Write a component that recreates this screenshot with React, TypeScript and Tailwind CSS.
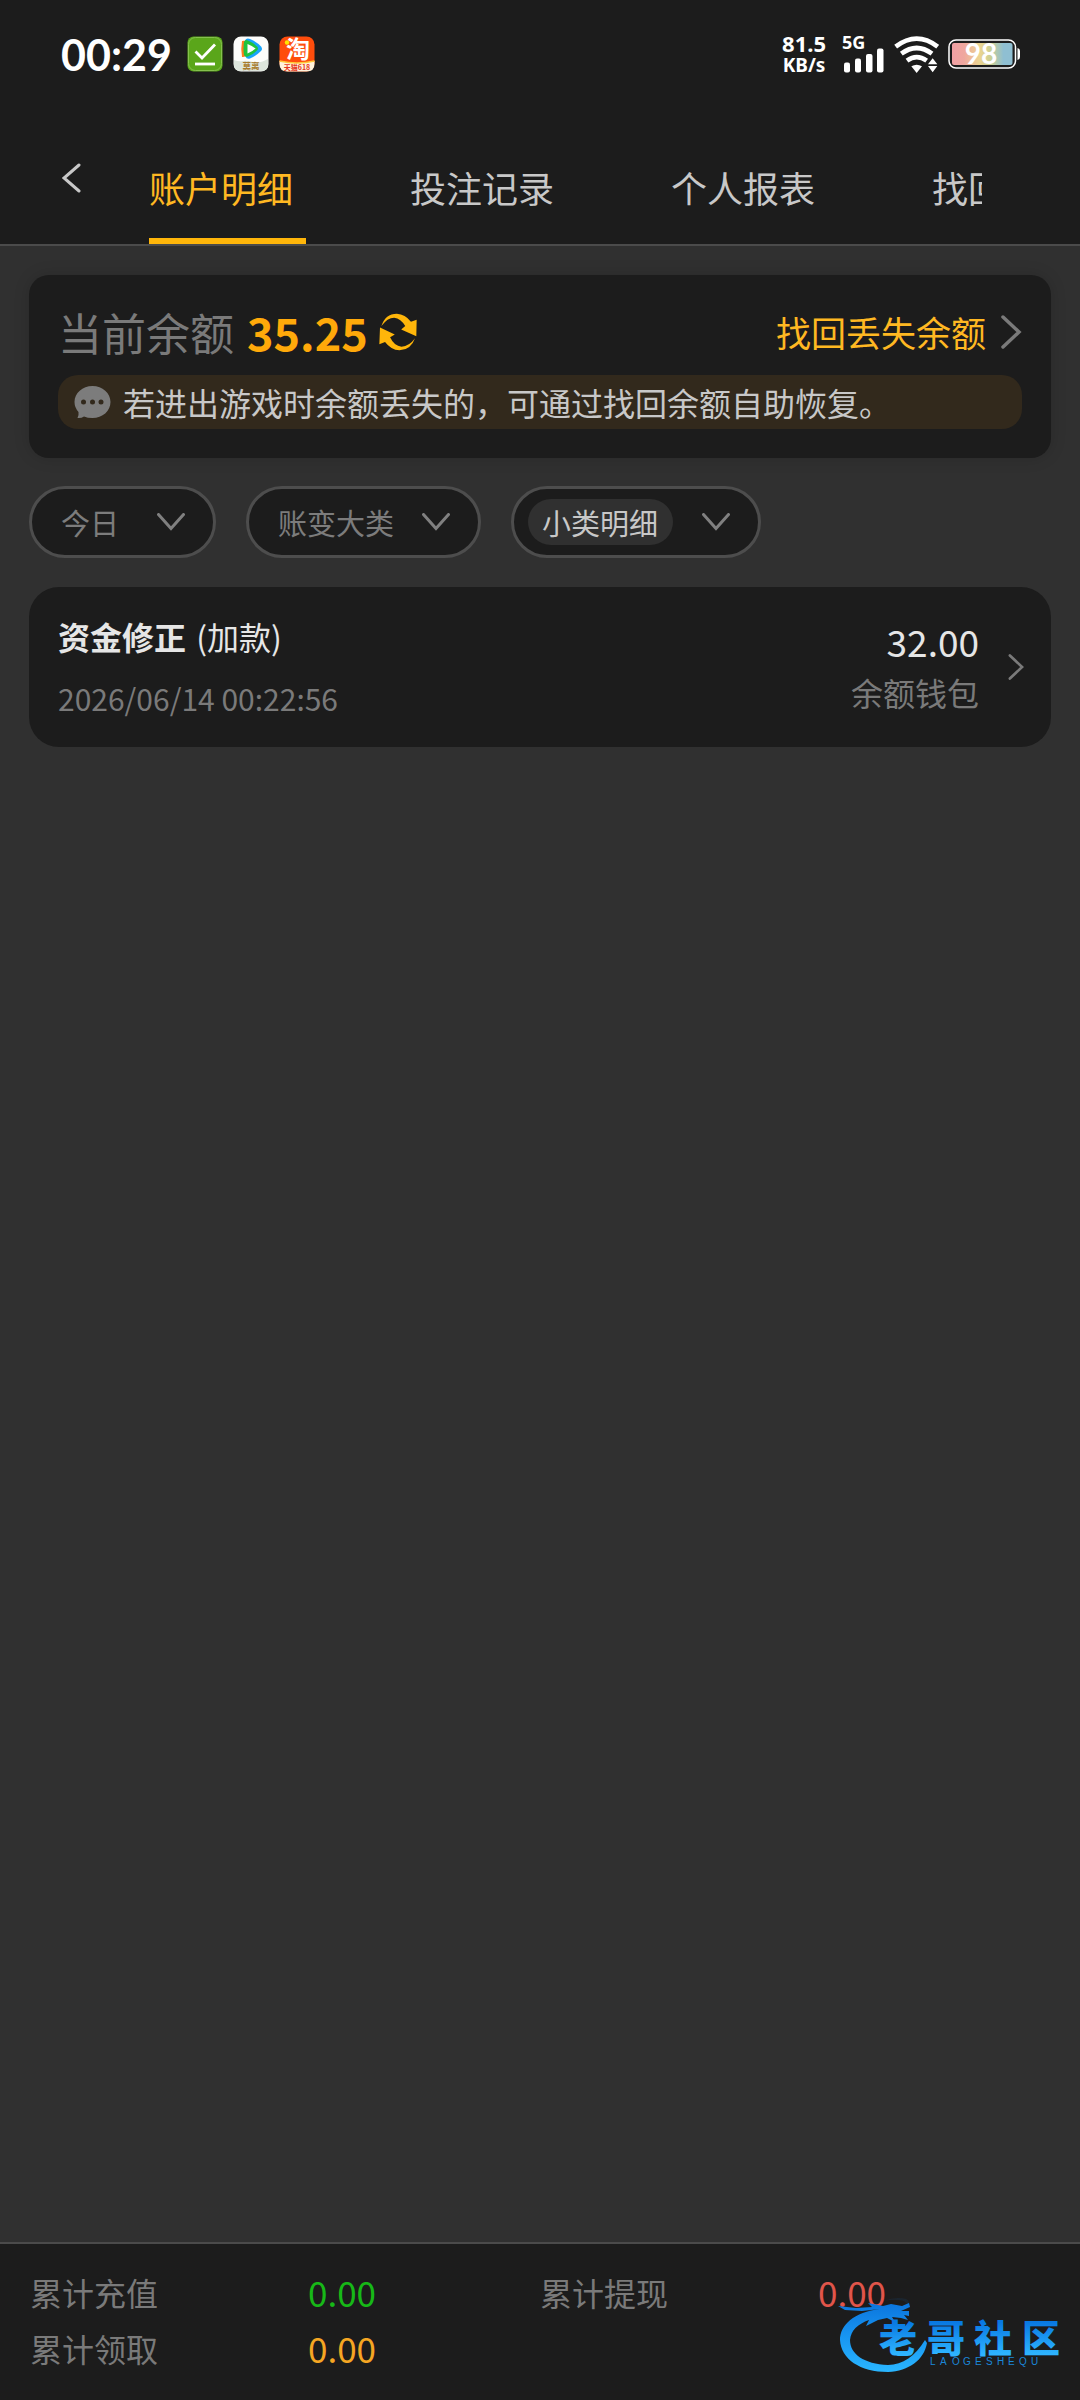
import type { ReactNode } from "react";

function ChevronDown() {
  return (
    <svg className="pointer-events-none h-[18px] w-[28px] shrink-0" viewBox="0 0 28 18" fill="none" stroke="#808080" strokeWidth="3" strokeLinecap="round" aria-hidden="true">
      <path d="M1.5 1.5 14 15.5 26.5 1.5" />
    </svg>
  );
}

function ChevronRight({ className }: { className: string }) {
  return (
    <svg className={className} viewBox="0 0 20 34" fill="none" stroke="#7a7a7a" strokeWidth="3.5" strokeLinecap="round" aria-hidden="true">
      <path d="M2 2 18 17 2 32" />
    </svg>
  );
}

function DownloadedIcon() {
  return (
    <svg className="size-9" viewBox="0 0 36 36" aria-hidden="true">
      <rect x="0.5" y="0.5" width="35" height="35" rx="6" fill="#5aa61a" />
      <rect x="1.5" y="1.5" width="33" height="33" rx="7" fill="none" stroke="#86c04f" />
      <path d="m8.5 15.5 6.5 6.5L28 8.5" fill="none" stroke="#fff" strokeWidth="2.8" />
      <path d="M8 28h20" stroke="#fff" strokeWidth="2.8" />
    </svg>
  );
}

function VideoIcon() {
  return (
    <svg className="size-9" viewBox="0 0 36 36" aria-hidden="true">
      <rect x="0.5" y="0.5" width="35" height="35" rx="7.5" fill="#fdfdfb" />
      <path d="M1 24q5 2 9 1t10 1 15-3v6q0 6-7 6H8q-7 0-7-6z" fill="#dde5dc" />
      <path d="M9 5Q7.5 13 9 21q3 .5 5-2V6Q12 4 9 5z" fill="#ff7a1c" />
      <path d="M12 4.5q1.5-3 5-1.5 7 3 11 7.5 2 2.5 0 4.5-5 5-11 7.5-3.5 1-4.5-2z" fill="#18a4fb" />
      <path d="M11 6q1-3 4-1.5 5 2 9 6 2 2 0 4-4 4-9 6-3 1-4-1.5-1-6 0-13z" fill="#20c33c" />
      <path d="M14.5 8q5 2 8 4.5-3 3-8 5z" fill="#fff" />
      <text x="18" y="32.5" textAnchor="middle" fontSize="8.5" fontWeight="700" fill="#a87a2a" fontFamily="Noto Sans CJK SC, sans-serif">莫离</text>
    </svg>
  );
}

function TaobaoIcon() {
  return (
    <svg className="size-9 overflow-visible" viewBox="0 0 36 36" aria-hidden="true">
      <rect x="0.5" y="0.5" width="35" height="35" rx="8" fill="#ff4d0c" />
      <path d="M.5 25q17.5 4 35 0v3q0 7.5-8 7.5h-19q-8 0-8-7.5z" fill="#fff3dc" />
      <path d="M.5 25q17.5 4 35 0" fill="none" stroke="#ffc83a" strokeWidth="1.5" />
      <text x="19" y="22" textAnchor="middle" fontSize="24" fontWeight="700" fill="#fff" fontFamily="Noto Sans CJK SC, sans-serif">淘</text>
      <circle cx="8" cy="6.5" r="2.2" fill="#ffe600" />
      <text x="18" y="33.5" textAnchor="middle" fontSize="7" fontWeight="700" fill="#e5361d" fontFamily="Noto Sans CJK SC, sans-serif">天猫618</text>
    </svg>
  );
}

function SignalIcon() {
  return (
    <svg className="h-[26px] w-[42px]" viewBox="0 0 42 26" fill="#fff" aria-hidden="true">
      <rect x="2" y="15.5" width="6" height="10" rx="2" />
      <rect x="13" y="11.5" width="6" height="14" rx="2" />
      <rect x="24" y="7" width="6.5" height="18.5" rx="2" />
      <rect x="35" y="1.5" width="6.5" height="24" rx="2" />
    </svg>
  );
}

function WifiIcon() {
  return (
    <svg className="h-[37px] w-[45px]" viewBox="402 46 135 111" fill="none" stroke="#fff" strokeWidth="14" aria-hidden="true">
      <path d="M407 78Q470 30 533 78" />
      <path d="M424 99Q470 65 516 99" />
      <path d="M441 120Q470 99 500 120" />
      <path d="M454 137q16-9 32 0l-16 20z" fill="#fff" stroke="none" />
      <path d="m518 113 14 18h-28zM504 136h28l-14 19z" fill="#fff" stroke="none" />
    </svg>
  );
}

function BatteryIcon() {
  return (
    <svg className="h-[30px] w-[73px] overflow-visible" viewBox="0 0 73 30" role="img" aria-label="98%">
      <defs>
        <linearGradient id="charge">
          <stop offset="0" stopColor="#f2a0a4" />
          <stop offset="0.2" stopColor="#efa79f" />
          <stop offset="0.45" stopColor="#ecd491" />
          <stop offset="0.65" stopColor="#c9cf94" />
          <stop offset="0.85" stopColor="#8fbfd2" />
          <stop offset="1" stopColor="#8fbfd2" />
        </linearGradient>
      </defs>
      <rect x="1" y="1" width="66.5" height="28" rx="7" fill="none" stroke="#fff" strokeWidth="1.5" />
      <rect x="4" y="4" width="60.5" height="22" rx="2" fill="url(#charge)" />
      <path d="M69.5 9q2.5.5 2.5 3v6q0 2.5-2.5 3z" fill="#fff" />
      <text x="33" y="25" textAnchor="middle" fontSize="28" fontWeight="700" fill="#fff" fontFamily="Lato, sans-serif">98</text>
    </svg>
  );
}

function RefreshIcon() {
  return (
    <svg className="h-[38px] w-[38px]" viewBox="1079 145 113 113" fill="#ffb60a" aria-hidden="true">
      <path d="M1086 184Q1098 147 1132 147 1157 148 1174 171L1191 165 1190 214 1145 194 1157 184Q1144 161 1124 159 1104 159 1086 184z" />
      <path d="M1082 188 1126 209 1112 217Q1124 243 1146 245 1169 244 1186 220 1174 255 1140 256 1114 254 1097 231L1080 238z" />
    </svg>
  );
}

function MessageIcon() {
  return (
    <svg className="h-[34px] w-[37px] shrink-0" viewBox="0 0 37 34" aria-hidden="true">
      <path d="M18.5 1C28.5 1 36.5 8 36.5 17S28.5 33 18.5 33q-5 0-8.5-1.5Q7 33.5 3.5 33q1.5-3 1-6Q.5 22.5.5 17C.5 8 8.5 1 18.5 1z" fill="#7c7c7c" />
      <g fill="#32291c">
        <circle cx="9.5" cy="17" r="2.5" />
        <circle cx="18.5" cy="17" r="2.5" />
        <circle cx="27" cy="17" r="2.5" />
      </g>
    </svg>
  );
}

function CommunityLogo() {
  return (
    <svg className="pointer-events-none absolute right-[14px] bottom-[22px] h-[80px] w-[228px] overflow-visible" viewBox="0 0 228 80" role="img" aria-label="老哥社区">
      <defs>
        <linearGradient id="ring" gradientUnits="userSpaceOnUse" x1="0" y1="4" x2="0" y2="74">
          <stop offset="0" stopColor="#0b74dc" />
          <stop offset="0.5" stopColor="#1896f2" />
          <stop offset="1" stopColor="#2ab6ff" />
        </linearGradient>
        <linearGradient id="name" gradientUnits="userSpaceOnUse" x1="0" y1="24" x2="0" y2="56">
          <stop offset="0" stopColor="#0878e2" />
          <stop offset="1" stopColor="#2eb4ff" />
        </linearGradient>
      </defs>
      <g fill="url(#ring)">
        <path d="M42 11C16 14 2 27 2 42 3 61 22 74 50 74 71 73 86 62 89 45L87 42C77 58 65 67 50 67 26 66 12 56 12 42 13 32 20 26 31 22L28 28 40 22 49 20 57 24 54 19 63 20 70 22 66 17 71 18 71 13 63 13 72 9 71 5 64 8 53 6 45 8 30 5 34 9 18 10 0 8 7 12 24 13z" />
        <path d="M46 3Q58-2 68 1q5 3 2 7-2-6-9-6-8-1-15 1z" opacity="0.1" />
      </g>
      <text x="41 89 136 184" y="54" fontSize="38" fontWeight="900" fill="url(#name)" fontFamily="Noto Sans CJK SC, sans-serif">老哥社区</text>
      <text x="92 102 114 125 137 148 159 170 181 193" y="67" fontSize="10" fill="#1b86d8" fontFamily="Liberation Sans, sans-serif">LAOGESHEQU</text>
    </svg>
  );
}

const tabs = ["账户明细", "投注记录", "个人报表", "找回余额"];

const totals = [
  { label: "累计充值", value: "0.00", color: "text-[#17b817]" },
  { label: "累计提现", value: "0.00", color: "text-[#e0554a]" },
  { label: "累计领取", value: "0.00", color: "text-[#f5a623]" },
];

function FilterChip({ label, className, selectClass, children }: { label: string; className: string; selectClass: string; children: ReactNode }) {
  return (
    <label className={`flex h-[72px] items-center justify-between rounded-full border-[3px] border-[#4d4d4d] bg-[#1c1c1c] pr-7 text-[29px] ${className}`}>
      <span className="sr-only">{label}</span>
      <select className={`appearance-none leading-[46px] outline-none ${selectClass}`}>{children}</select>
      <ChevronDown />
    </label>
  );
}

export default function App() {
  return (
    <div className="flex min-h-screen flex-col bg-[#303030] font-['Noto_Sans_CJK_SC',sans-serif] text-[#c8c8c8]">
      <header className="border-b-2 border-[#4b4b4b] bg-[#1c1c1c]">
        <div className="flex h-[108px] items-center justify-between pr-[59px] pl-[61px] text-white">
          <div className="flex items-center gap-[10px]">
            <span className="mr-[5px] font-['Lato',sans-serif] text-[43px] leading-none font-bold">00:29</span>
            <DownloadedIcon />
            <VideoIcon />
            <TaobaoIcon />
          </div>
          <div className="flex items-center">
            <div className="mr-4 text-center font-['Noto_Sans',sans-serif] font-bold">
              <div className="text-[22px] leading-[22px]">81.5</div>
              <div className="text-[19px] leading-[22px]">KB/s</div>
            </div>
            <div className="mr-[10px] font-['Noto_Sans',sans-serif]">
              <div className="h-3 text-[18px] leading-[14px] font-bold">5G</div>
              <SignalIcon />
            </div>
            <div className="mr-[9px]">
              <WifiIcon />
            </div>
            <BatteryIcon />
          </div>
        </div>
        <div className="flex h-[136px] pr-[98px]">
          <button type="button" aria-label="返回" className="flex w-[149px] shrink-0 items-start pt-[55px] pl-[62px]">
            <svg className="h-[30px] w-[19px]" viewBox="0 0 19 30" fill="none" stroke="#c8c8c8" strokeWidth="3" strokeLinecap="round" aria-hidden="true">
              <path d="M17 2 2 15 17 28" />
            </svg>
          </button>
          <nav className="flex min-w-0 grow gap-[104px] overflow-hidden text-[36px]">
            {tabs.map((tab, i) => (
              <button
                key={tab}
                type="button"
                className={
                  i === 0
                    ? "w-[157px] shrink-0 border-b-[6px] border-[#ffb60a] pt-7 text-left text-[#ffb822]"
                    : "w-[157px] shrink-0 border-b-[6px] border-transparent pt-7 text-left"
                }
              >
                {tab}
              </button>
            ))}
          </nav>
        </div>
      </header>

      <main className="flex flex-col px-[29px] pt-[29px]">
        <section className="rounded-[20px] bg-[#1c1c1c] px-[29px] pt-[27px] pb-[29px] shadow-[0_0_16px_rgba(0,0,0,0.15)]">
          <div className="flex h-[60px] items-center justify-between">
            <div className="flex items-center text-[44px] leading-[60px]">
              <span className="text-[#7a7a7a]">当前余额</span>
              <strong className="ml-[13px] text-[45px] font-bold text-[#ffa90a]">35.25</strong>
              <button type="button" aria-label="刷新余额" className="ml-[11px]">
                <RefreshIcon />
              </button>
            </div>
            <a href="#recover" className="flex items-center gap-[14px] text-[35px] text-[#ffb822]">
              找回丢失余额
              <ChevronRight className="h-[34px] w-[22px]" />
            </a>
          </div>
          <p className="mt-[13px] flex h-[54px] items-center gap-3 rounded-[20px] bg-[#32291c] pl-4 text-[32px]">
            <MessageIcon />
            若进出游戏时余额丢失的，可通过找回余额自助恢复。
          </p>
        </section>

        <form className="mt-7 flex gap-[30px]">
          <FilterChip label="日期" className="w-[187px] pl-[29px]" selectClass="text-[#7c7c7c]">
            <option>今日</option>
          </FilterChip>
          <FilterChip label="大类" className="gap-[27px] pl-[29px]" selectClass="text-[#7c7c7c]">
            <option>账变大类</option>
          </FilterChip>
          <FilterChip label="小类" className="gap-[29px] pl-[14px]" selectClass="rounded-full bg-[#303030] px-[14px] text-[#c8c8c8]">
            <option>小类明细</option>
          </FilterChip>
        </form>

        <a href="#record" className="mt-[29px] flex h-[160px] items-center rounded-[30px] bg-[#1c1c1c] pr-[27px] pl-[29px] text-[32px]">
          <div className="grow">
            <div className="leading-[48px] text-[#e6e6e6]">
              <strong className="mr-[3px]">资金修正</strong> (加款)
            </div>
            <div className="mt-[14px] text-[30px] leading-[48px] text-[#7a7a7a]">2026/06/14 00:22:56</div>
          </div>
          <div className="mr-[29px] text-right">
            <div className="text-[37px] leading-[50px] text-[#e6e6e6]">32.00</div>
            <div className="leading-[52px] text-[#7a7a7a]">余额钱包</div>
          </div>
          <ChevronRight className="h-[26px] w-4" />
        </a>
      </main>

      <footer className="relative mt-auto h-[158px] border-t-2 border-[#4b4b4b] bg-[#1c1c1c] px-[30px] pt-5">
        <dl className="grid grid-cols-2 text-[32px] leading-[56px]">
          {totals.map((t) => (
            <div key={t.label} className="flex">
              <dt className="w-[278px] text-[#7a7a7a]">{t.label}</dt>
              <dd className={`text-[35px] ${t.color}`}>{t.value}</dd>
            </div>
          ))}
        </dl>
        <CommunityLogo />
      </footer>
    </div>
  );
}
